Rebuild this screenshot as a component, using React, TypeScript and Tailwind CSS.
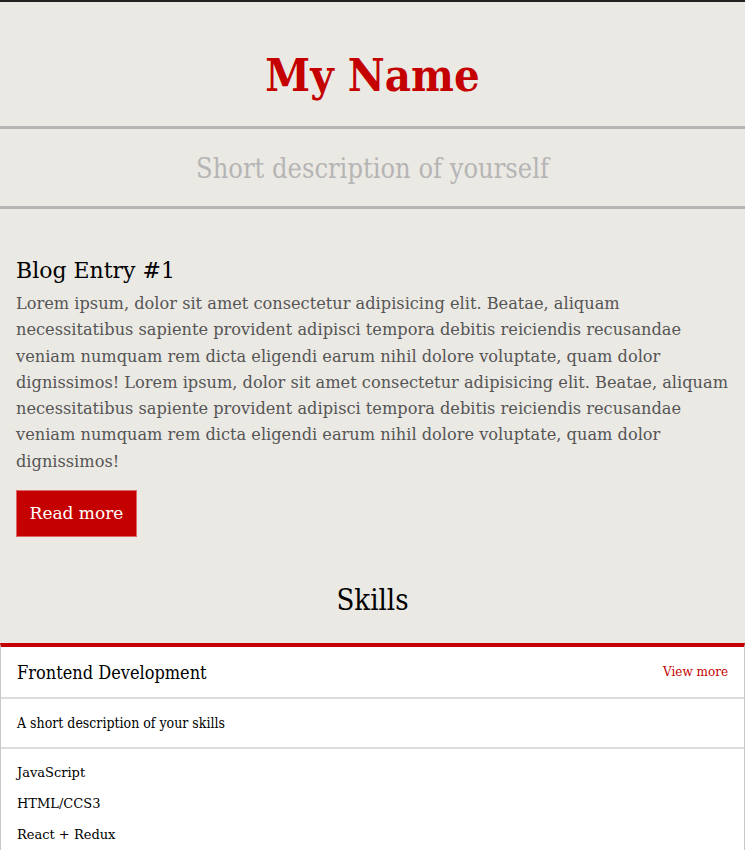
import React from "react";

const lorem =
  "Lorem ipsum, dolor sit amet consectetur adipisicing elit. Beatae, aliquam necessitatibus sapiente provident adipisci tempora debitis reiciendis recusandae veniam numquam rem dicta eligendi earum nihil dolore voluptate, quam dolor dignissimos! Lorem ipsum, dolor sit amet consectetur adipisicing elit. Beatae, aliquam necessitatibus sapiente provident adipisci tempora debitis reiciendis recusandae veniam numquam rem dicta eligendi earum nihil dolore voluptate, quam dolor dignissimos!";

const skills = ["JavaScript", "HTML/CCS3", "React + Redux"];

export default function App() {
  return (
    <div className="min-h-[850px] bg-[#ebe9e4] border-t-2 border-[#222] font-['DejaVu_Serif',serif]">
      {/* header */}
      <header className="text-center">
        <h1 className="pt-[42px] pb-[18px] text-[45px] leading-[64px] font-bold text-[#c40000] font-['DejaVu_Serif_Condensed','DejaVu_Serif',serif] [font-stretch:condensed]">
          My Name
        </h1>
        <div className="border-y-[3px] border-[#b5b5b5] pt-[22px] pb-[19px]">
          <p className="text-[27px] leading-[36px] text-[#b5b5b5] font-['DejaVu_Serif_Condensed','DejaVu_Serif',serif] [font-stretch:condensed]">
            Short description of yourself
          </p>
        </div>
      </header>

      {/* blog */}
      <section className="px-4 pt-[47px]">
        <h2 className="text-[22px] leading-[30px] text-black">Blog Entry #1</h2>
        <p className="mt-[5px] text-[16.2px] leading-[26.3px] text-[#555]">{lorem}</p>
        <button className="mt-[15px] h-[47px] w-[121px] bg-[#c40000] border border-[#d66] text-white text-[17px]">
          Read more
        </button>
      </section>

      {/* skills */}
      <section className="mt-[47px]">
        <h2 className="text-center text-[29px] leading-[32px] text-black font-['DejaVu_Serif_Condensed','DejaVu_Serif',serif] [font-stretch:condensed]">
          Skills
        </h2>
        <div className="mt-[27px] bg-white border-t-4 border-t-[#c40000] border-x border-x-[#c8c8c8]">
          <div className="flex items-center justify-between px-4 h-[52px] border-b-2 border-[#dcdcdc]">
            <span className="text-[18px] text-black font-['DejaVu_Serif_Condensed','DejaVu_Serif',serif] [font-stretch:condensed]">
              Frontend Development
            </span>
            <a className="text-[12px] text-[#c40000]">View more</a>
          </div>
          <div className="px-4 h-[50px] flex items-center border-b-2 border-[#dcdcdc]">
            <span className="text-[14px] text-black font-['DejaVu_Serif_Condensed','DejaVu_Serif',serif] [font-stretch:condensed]">
              A short description of your skills
            </span>
          </div>
          <ul className="px-4 pt-[8px]">
            {skills.map((s) => (
              <li key={s} className="text-[13px] leading-[31px] text-black">
                {s}
              </li>
            ))}
          </ul>
        </div>
      </section>
    </div>
  );
}
